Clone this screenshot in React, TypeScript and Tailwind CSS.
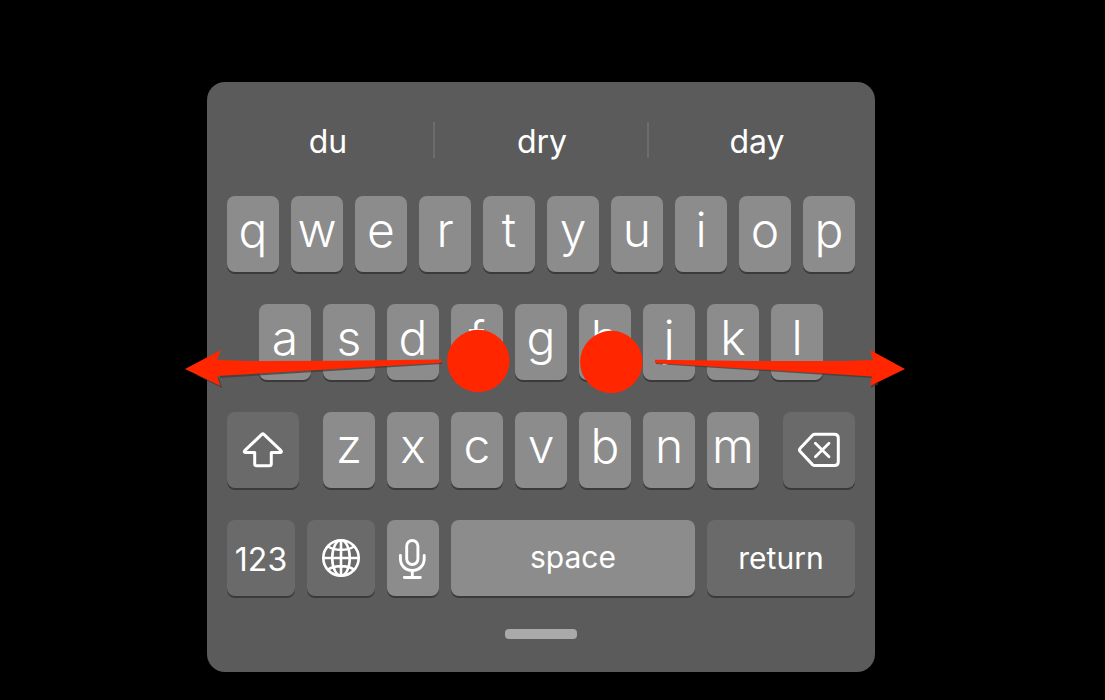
import React from 'react';

interface KeyProps {
  children: React.ReactNode;
  label?: string;
  dark?: boolean;
  className?: string;
}

const suggestions = ['du', 'dry', 'day'];
const topRow = 'qwertyuiop'.split('');
const homeRow = 'asdfghjkl'.split('');
const bottomRow = 'zxcvbnm'.split('');

const Key: React.FC<KeyProps> = ({ children, label, dark, className = '' }) => (
  <button
    type="button"
    aria-label={label}
    className={`flex h-[76px] min-w-0 items-center justify-center rounded-lg text-white shadow-[0_2px_0_#3a3a3a] ${
      dark ? 'bg-[#6a6a6a]' : 'bg-[#8c8c8c]'
    } ${className}`}
  >
    {children}
  </button>
);

const LetterKey: React.FC<{ letter: string }> = ({ letter }) => (
  <Key className="flex-1 pb-2 text-5xl leading-none font-light">{letter}</Key>
);

const ShiftIcon = () => (
  <svg width="44" height="40" viewBox="0 0 44 40" fill="none" stroke="currentColor" strokeWidth="3" strokeLinejoin="round">
    <path d="M20.8 4.4 3.7 20.7c-.8.8-.4 1.8.8 1.8h9.2v11.2c0 1.2.8 2 2 2h12.6c1.2 0 2-.8 2-2V22.5h8.9c1.2 0 1.6-1 .8-1.8L22.9 4.4c-.6-.6-1.5-.6-2.1 0Z" />
  </svg>
);

const DeleteIcon = () => (
  <svg width="44" height="40" viewBox="0 0 44 40" fill="none" stroke="currentColor" strokeWidth="3" strokeLinejoin="round" strokeLinecap="round">
    <path d="M18 4.2h19.3c2.4 0 4 1.6 4 4v23.4c0 2.4-1.6 4-4 4H18c-1 0-1.8-.3-2.5-1L3.2 21.5c-1-1-1-2.2 0-3.2L15.5 5.2c.7-.7 1.5-1 2.5-1Z" />
    <path d="m18.4 13.3 13.6 13.4M32 13.3 18.4 26.7" strokeWidth="2.8" />
  </svg>
);

const GlobeIcon = () => (
  <svg width="40" height="40" viewBox="0 0 40 40" fill="none" stroke="currentColor" strokeWidth="2.6">
    <circle cx="20" cy="20" r="17.7" />
    <ellipse cx="20" cy="20" rx="8.8" ry="17.7" />
    <path d="M20 2v36M2 20h36M7 8.5c7 4.5 19 4.5 26 0M7 31.5c7-4.5 19-4.5 26 0" />
  </svg>
);

const MicIcon = () => (
  <svg width="32" height="44" viewBox="0 0 32 44" fill="none" stroke="currentColor" strokeWidth="2.9" strokeLinecap="round">
    <rect x="9.7" y="4.5" width="11.2" height="24" rx="5.6" />
    <path d="M3.4 19.5v3c0 7 5 12 11.9 12s11.9-5 11.9-12v-3M15.3 34.5v6.8M7.3 41.5h16" />
  </svg>
);

// Two thumbs sliding apart over the keyboard
const SpreadGesture = () => (
  <svg
    viewBox="0 0 720 70"
    aria-hidden="true"
    className="pointer-events-none absolute top-[246px] -right-[30px] -left-[22px]"
  >
    <g fill="#3a3a3a" opacity=".7" transform="translate(1 2)">
      <path d="M34 48 256 34v-2L34 36Z" />
      <path d="M686 48 470 34v-2l216 4Z" />
      <path d="m10 45 26 13-3-10ZM686 48l-1 10 8-4Z" />
    </g>
    <g fill="#ff2600">
      <path d="M0 41 36 22l-4 9.800 31 1.200 90-.2 103.500-1.200v3.200L32 48l3.500 10Z" />
      <path d="M720 41 685 22l3 10-31 1-90-.1-97-1.200v3.200L687 48.500 685 58Z" />
      <circle cx="293.300" cy="33" r="31.200" />
      <circle cx="426.300" cy="34" r="31.200" />
    </g>
  </svg>
);

export default function App() {
  return (
    <main className="min-h-screen bg-black pt-[82px] pr-[23px] pb-7 font-['Inter',sans-serif]">
      <section aria-label="Keyboard" className="relative mx-auto w-full max-w-[668px] rounded-[18px] bg-[#5b5b5b] px-5 pt-10 pb-[33px]">
        <div className="-mr-2 -ml-1.5 grid grid-cols-3 divide-x-2 divide-[#6c6c6c]">
          {suggestions.map((word) => (
            <button key={word} type="button" className="h-9 pt-0.5 pl-0.5 text-[32px] leading-9 text-white">
              {word}
            </button>
          ))}
        </div>

        <div className="mt-[38px] flex flex-col gap-8">
          <div className="flex gap-3">
            {topRow.map((letter) => (
              <LetterKey key={letter} letter={letter} />
            ))}
          </div>
          <div className="flex gap-3 px-8">
            {homeRow.map((letter) => (
              <LetterKey key={letter} letter={letter} />
            ))}
          </div>
          <div className="flex gap-6">
            <Key dark label="Shift" className="w-[72px]">
              <ShiftIcon />
            </Key>
            <div className="flex flex-1 gap-3">
              {bottomRow.map((letter) => (
                <LetterKey key={letter} letter={letter} />
              ))}
            </div>
            <Key dark label="Delete" className="w-[72px]">
              <DeleteIcon />
            </Key>
          </div>
          <div className="flex gap-3">
            <Key dark className="w-[68px] pt-1 text-[32px] leading-none">123</Key>
            <Key dark label="Next keyboard" className="w-[68px]">
              <GlobeIcon />
            </Key>
            <Key label="Dictate" className="w-[52px]">
              <MicIcon />
            </Key>
            <Key className="flex-1 pb-0.5 text-[30px] leading-none">space</Key>
            <Key dark className="w-[148px] text-[30px] leading-none">return</Key>
          </div>
        </div>

        <div className="mx-auto mt-[33px] h-2.5 w-[72px] rounded bg-[#aaaaaa]" />
        <SpreadGesture />
      </section>
    </main>
  );
}
